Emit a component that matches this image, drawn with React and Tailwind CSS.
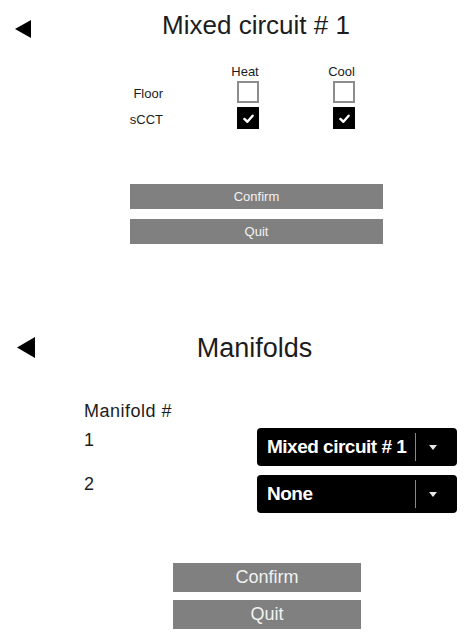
function BackArrow({ className }) {
  return (
    <svg className={className} viewBox="0 0 16 18" preserveAspectRatio="none">
      <polygon points="16,0 0,9 16,18" fill="#000" />
    </svg>
  );
}

function Check({ checked }) {
  if (!checked) {
    return <div className="w-[22px] h-[22px] border-2 border-[#8c8c8c] bg-white box-border" />;
  }
  return (
    <div className="w-[22px] h-[22px] bg-black flex items-center justify-center">
      <svg width="13" height="13" viewBox="0 0 14 14">
        <polyline points="2.5,7.5 5.8,10.5 11.5,4" fill="none" stroke="#fff" strokeWidth="2.6" strokeLinecap="round" strokeLinejoin="round" />
      </svg>
    </div>
  );
}

function Dropdown({ label }) {
  return (
    <div className="w-[200px] h-[38px] bg-black rounded-[4px] flex items-center">
      <div className="w-[158px] pl-[10px] text-white font-bold text-[19px] tracking-[-0.5px] leading-[22px] whitespace-nowrap">
        {label}
      </div>
      <div className="w-px h-[28px] bg-[#8a8a8a]" />
      <div className="flex-1 flex items-center justify-center pr-[8px]">
        <svg width="8" height="5" viewBox="0 0 8 5">
          <polygon points="0,0 8,0 4,5" fill="#e8e8e8" />
        </svg>
      </div>
    </div>
  );
}

export default function App() {
  return (
    <div className="w-[471px] h-[644px] bg-white font-['Liberation_Sans',Arial,sans-serif] text-[#1c1c1c] overflow-hidden">
      {/* Section 1: Mixed circuit */}
      <div className="flex items-start pt-[10px]">
        <BackArrow className="ml-[15px] mt-[10px] w-[16px] h-[18px]" />
        <h1 className="flex-1 text-center text-[26px] leading-[30px] pl-[10px]">Mixed circuit # 1</h1>
      </div>

      <div className="mt-[24px] flex items-center pl-[103px] h-[16px]">
        <div className="w-[60px]" />
        <div className="ml-[63px] w-[44px] text-center text-[13px] leading-[16px] pr-[6px]">Heat</div>
        <div className="ml-[52px] w-[44px] text-center text-[13px] leading-[16px] pr-[5px]">Cool</div>
      </div>

      <div className="mt-[1px] flex items-center pl-[103px] h-[22px]">
        <div className="w-[60px] text-right text-[13px] leading-[16px] pt-[3px]">Floor</div>
        <div className="ml-[63px] w-[44px] flex justify-center"><Check checked={false} /></div>
        <div className="ml-[52px] w-[44px] flex justify-center"><Check checked={false} /></div>
      </div>

      <div className="mt-[4px] flex items-center pl-[103px] h-[22px]">
        <div className="w-[60px] text-right text-[13px] leading-[16px] pt-[3px]">sCCT</div>
        <div className="ml-[63px] w-[44px] flex justify-center"><Check checked={true} /></div>
        <div className="ml-[52px] w-[44px] flex justify-center"><Check checked={true} /></div>
      </div>

      <div className="mt-[55px] ml-[130px] w-[253px] flex flex-col gap-[10px]">
        <button className="h-[25px] bg-[#808080] text-[#f2f2f2] text-[13px] flex items-center justify-center">Confirm</button>
        <button className="h-[25px] bg-[#808080] text-[#f2f2f2] text-[13px] flex items-center justify-center">Quit</button>
      </div>

      {/* Section 2: Manifolds */}
      <div className="mt-[89px] flex items-start">
        <BackArrow className="ml-[17px] mt-[4px] w-[18px] h-[21px]" />
        <h1 className="flex-1 text-center text-[27px] leading-[31px] pl-[3px]">Manifolds</h1>
      </div>

      <div className="mt-[36px] pl-[84px] text-[18px] leading-[22px] tracking-[0.5px]">Manifold #</div>

      <div className="mt-[6px] flex items-start pl-[84px]">
        <div className="w-[173px] mt-[1px] text-[18px] leading-[22px]">1</div>
        <Dropdown label="Mixed circuit # 1" />
      </div>

      <div className="mt-[9px] flex items-start pl-[84px]">
        <div className="w-[173px] mt-[-2px] text-[18px] leading-[22px]">2</div>
        <Dropdown label="None" />
      </div>

      <div className="mt-[50px] ml-[173px] w-[188px] flex flex-col gap-[8px]">
        <button className="h-[29px] bg-[#808080] text-[#f2f2f2] text-[18px] flex items-center justify-center">Confirm</button>
        <button className="h-[29px] bg-[#808080] text-[#f2f2f2] text-[18px] flex items-center justify-center">Quit</button>
      </div>
    </div>
  );
}
